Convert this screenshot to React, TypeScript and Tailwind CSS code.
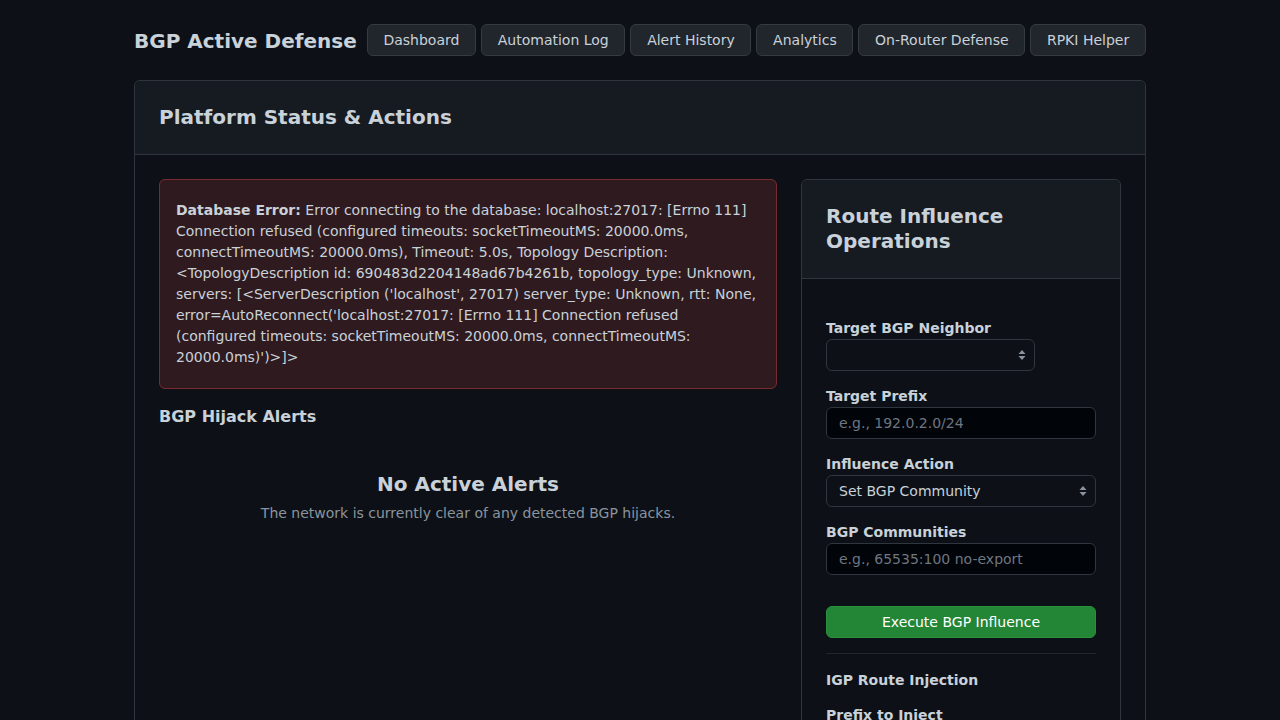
import React from 'react';

const navItems = ['Dashboard', 'Automation Log', 'Alert History', 'Analytics', 'On-Router Defense', 'RPKI Helper'];

const errorText =
  "Error connecting to the database: localhost:27017: [Errno 111] Connection refused (configured timeouts: socketTimeoutMS: 20000.0ms, connectTimeoutMS: 20000.0ms), Timeout: 5.0s, Topology Description: <TopologyDescription id: 690483d2204148ad67b4261b, topology_type: Unknown, servers: [<ServerDescription ('localhost', 27017) server_type: Unknown, rtt: None, error=AutoReconnect('localhost:27017: [Errno 111] Connection refused (configured timeouts: socketTimeoutMS: 20000.0ms, connectTimeoutMS: 20000.0ms)')>]>";

const SelectArrows = () => (
  <svg width="10" height="12" viewBox="0 0 10 12" className="absolute right-[8px] top-1/2 -translate-y-1/2 pointer-events-none">
    <path d="M5 1 L8.5 5 H1.5 Z" fill="#8b949e" />
    <path d="M5 11 L8.5 7 H1.5 Z" fill="#8b949e" />
  </svg>
);

const Field = ({ label, children }: { label: string; children: React.ReactNode }) => (
  <div className="mb-4">
    <label className="block text-sm font-bold leading-[18px] mb-[2px] text-[#c9d1d9]">{label}</label>
    {children}
  </div>
);

export default function App() {
  return (
    <div className="min-h-screen bg-[#0d1117] text-[#c9d1d9] font-['DejaVu_Sans',sans-serif]">
      <div className="w-[1012px] mx-auto pt-6">
        {/* header */}
        <header className="flex items-center h-8 mb-6 whitespace-nowrap">
          <h1 className="shrink-0 text-[20px] font-bold text-[#c9d1d9] mr-[10px] mt-[2px]">BGP Active Defense</h1>
          <nav className="flex gap-[5px] shrink-0">
            {navItems.map((n) => (
              <button
                key={n}
                type="button"
                className="shrink-0 h-8 px-[15.7px] text-sm rounded-md bg-[#21262d] border border-[#363b42] text-[#c9d1d9]"
              >
                {n}
              </button>
            ))}
          </nav>
        </header>

        {/* main card */}
        <section className="border border-[#30363d] rounded-md">
          <div className="h-[74px] bg-[#161b22] border-b border-[#30363d] rounded-t-md flex items-center px-6 pb-[2px]">
            <h2 className="text-[20px] font-bold text-[#c9d1d9]">Platform Status &amp; Actions</h2>
          </div>

          <div className="p-6 flex gap-6 items-start">
            {/* left column */}
            <div className="w-[618px]">
              <div className="bg-[#2f1b1f] border border-[#7a2a2e] rounded-md px-4 py-[20px] text-sm leading-[21px] text-[#c9d1d9]">
                <strong className="font-bold">Database Error:</strong> {errorText}
              </div>

              <h3 className="mt-[18px] text-base font-bold leading-5 text-[#c9d1d9]">BGP Hijack Alerts</h3>

              <div className="text-center pt-[45px]">
                <p className="text-[20px] font-bold leading-6 text-[#c9d1d9]">No Active Alerts</p>
                <p className="text-sm mt-[7px] text-[#8b949e]">The network is currently clear of any detected BGP hijacks.</p>
              </div>
            </div>

            {/* right column */}
            <div className="w-[320px] border border-[#30363d] rounded-md">
              <div className="bg-[#161b22] border-b border-[#30363d] rounded-t-md px-6 pt-[24px] pb-[24px]">
                <h2 className="text-[20px] font-bold leading-[25px] text-[#c9d1d9]">
                  Route Influence
                  <br />
                  Operations
                </h2>
              </div>
              <div className="px-6 pt-[40px] pb-6">
                <Field label="Target BGP Neighbor">
                  <div className="relative w-[209px]">
                    <select className="appearance-none w-full h-8 rounded-md bg-[#0d1117] border border-[#30363d] text-sm px-3 text-[#c9d1d9]" />
                    <SelectArrows />
                  </div>
                </Field>
                <Field label="Target Prefix">
                  <input
                    placeholder="e.g., 192.0.2.0/24"
                    className="w-full h-8 rounded-md bg-[#010409] border border-[#30363d] text-sm px-3 text-[#c9d1d9] placeholder:text-[#6e7681] outline-none"
                  />
                </Field>
                <Field label="Influence Action">
                  <div className="relative">
                    <select className="appearance-none w-full h-8 rounded-md bg-[#0d1117] border border-[#30363d] text-sm px-3 text-[#c9d1d9]">
                      <option>Set BGP Community</option>
                    </select>
                    <SelectArrows />
                  </div>
                </Field>
                <Field label="BGP Communities">
                  <input
                    placeholder="e.g., 65535:100 no-export"
                    className="w-full h-8 rounded-md bg-[#010409] border border-[#30363d] text-sm px-3 text-[#c9d1d9] placeholder:text-[#6e7681] outline-none"
                  />
                </Field>

                <button
                  type="button"
                  className="mt-[15px] w-full h-8 rounded-md bg-[#238636] border border-[#2a903b] text-sm text-white"
                >
                  Execute BGP Influence
                </button>

                <hr className="mt-[15px] mb-[16px] border-0 border-t border-[#21262d]" />

                <h3 className="text-sm font-bold leading-5 text-[#c9d1d9]">IGP Route Injection</h3>
                <div className="mt-4">
                  <Field label="Prefix to Inject">
                    <input
                      placeholder="e.g., 10.10.10.0/24"
                      className="w-full h-8 rounded-md bg-[#010409] border border-[#30363d] text-sm px-3 text-[#c9d1d9] placeholder:text-[#6e7681] outline-none"
                    />
                  </Field>
                </div>
              </div>
            </div>
          </div>
        </section>
      </div>
    </div>
  );
}
